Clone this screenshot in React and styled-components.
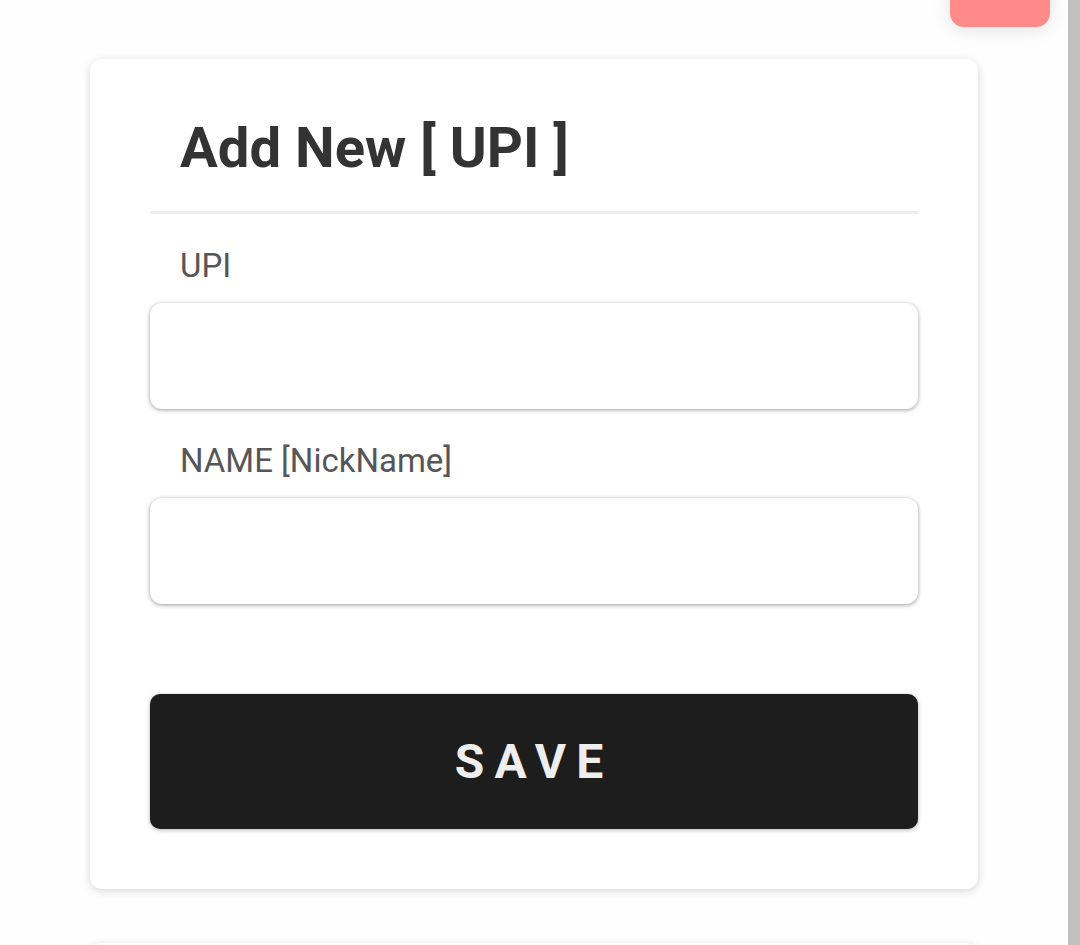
import React from "react";
import styled, { createGlobalStyle } from "styled-components";

const GlobalStyle = createGlobalStyle`
    html, body {
        margin: 0;
        padding: 0;
        height: 100%;
        overflow: hidden;
        background: #fefefe;
        font-family: Roboto, "Noto Sans", Arial, sans-serif;
    }
`;

const App = () => {
    return (
        <>
            <GlobalStyle />
            <PageBlock>
                <div className="contents">
                    <FloatButton>
                        <span>Back</span>
                    </FloatButton>
                    <Card>
                        <CardHeader>
                            <h2>Add New [ UPI ]</h2>
                        </CardHeader>
                        <Field>
                            <Label>UPI</Label>
                            <Input type="text" />
                        </Field>
                        <Field>
                            <Label>NAME [NickName]</Label>
                            <Input type="text" />
                        </Field>
                        <SaveButton>SAVE</SaveButton>
                    </Card>
                    <Card $empty />
                </div>
                <ScrollBar />
            </PageBlock>
        </>
    );
};

const PageBlock = styled.div`
    display: flex;
    height: 945px;
    overflow: hidden;

    .contents {
        position: relative;
        flex: 1;
        padding: 59px 0 0 90px;
        box-sizing: border-box;
        display: flex;
        flex-direction: column;
        gap: 54px;
    }
`;

const ScrollBar = styled.div`
    width: 12px;
    background: #c1c1c1;
`;

const FloatButton = styled.div`
    position: absolute;
    top: -33px;
    left: 950px;
    width: 100px;
    height: 60px;
    border-radius: 14px;
    background: #ff8a8a;
    box-shadow: 0 2px 18px rgba(0, 0, 0, 0.12);
    display: flex;
    justify-content: center;

    span {
        margin-top: 10px;
        color: #fff;
        font-size: 22px;
        line-height: 1;
        height: 24px;
    }
`;

const Card = styled.div`
    width: 888px;
    min-height: ${(props) => (props.$empty ? "300px" : "auto")};
    flex-shrink: 0;
    box-sizing: border-box;
    padding: 56px 60px 60px;
    background: #fff;
    border-radius: 12px;
    box-shadow: 0 2px 8px rgba(0, 0, 0, 0.16);
    display: flex;
    flex-direction: column;
`;

const CardHeader = styled.div`
    padding: 0 0 30px 30px;
    border-bottom: 3px solid #eeeeee;

    h2 {
        margin: 0;
        font-size: 56.2px;
        font-weight: 700;
        line-height: normal;
        color: #333;
    }
`;

const Field = styled.div`
    display: flex;
    flex-direction: column;
    gap: 18px;
    margin-top: 32px;
`;

const Label = styled.label`
    padding-left: 30px;
    font-size: 33px;
    line-height: normal;
    color: #565656;
`;

const Input = styled.input`
    height: 106px;
    box-sizing: border-box;
    border: none;
    outline: none;
    border-radius: 12px;
    background: #fff;
    box-shadow: 0 1px 4px rgba(0, 0, 0, 0.4);
    padding: 0 30px;
    font-size: 32px;
    font-family: inherit;
`;

const SaveButton = styled.button`
    margin-top: 90px;
    height: 135px;
    border: none;
    border-radius: 10px;
    background: #1d1d1d;
    box-shadow: 0 1px 4px rgba(0, 0, 0, 0.3);
    color: #eeeeee;
    font-family: inherit;
    font-size: 48px;
    font-weight: 700;
    letter-spacing: 10px;
    cursor: pointer;
`;

export default App;
